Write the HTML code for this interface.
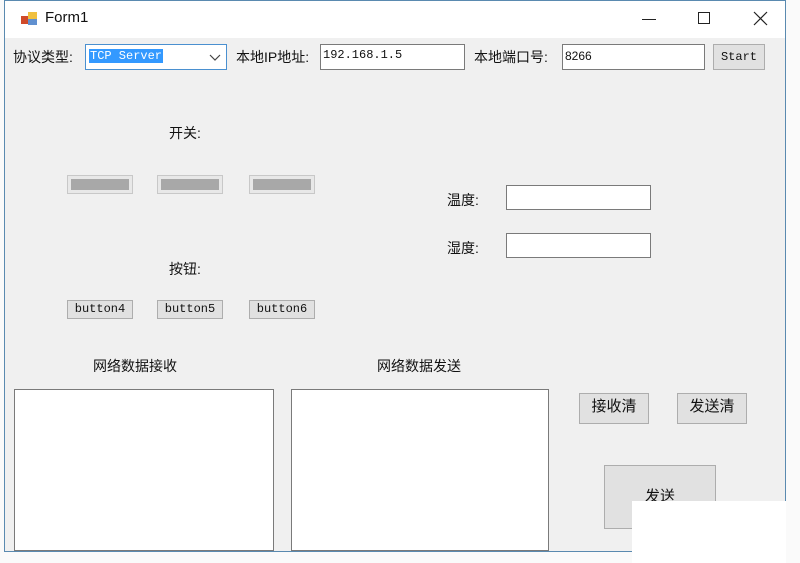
<!DOCTYPE html>
<html><head><meta charset="utf-8"><style>
*{margin:0;padding:0;box-sizing:border-box}
body{width:800px;height:563px;background:#fafafa;position:relative;overflow:hidden;font-family:"Liberation Sans","Noto Sans CJK SC",sans-serif;font-size:14px;color:#111}
.a{position:absolute}
.win{left:4px;top:0;width:782px;height:552px;border:1px solid #5a8ab0;background:#f0f0f0}
.title{left:5px;top:1px;width:780px;height:37px;background:#fff}
.tb{background:#fff;border:1px solid #7a7a7a}
.btn{background:#e1e1e1;border:1px solid #adadad;text-align:center}
.mono{font-family:"Liberation Mono","Noto Serif CJK SC",monospace;font-size:12px}
.g{border:1px solid #c8c8c8;background:#e8e8e8;padding:3px}
.g div{background:#a8a8a8;width:100%;height:100%}
</style></head><body>
<div class="a win"></div>
<div class="a title"></div>
<div class="a" style="left:21px;top:12px;width:16px;height:14px">
<div class="a" style="left:0;top:4px;width:8px;height:8px;background:#d04a2a"></div>
<div class="a" style="left:7px;top:0;width:9px;height:8px;background:#f0c040"></div>
<div class="a" style="left:7px;top:7px;width:9px;height:6px;background:#6090d0"></div>
</div>
<div class="a" style="left:45px;top:9px;font-size:15px">Form1</div>
<div class="a" style="left:642px;top:19px;width:14px;height:1px;background:#222"></div>
<div class="a" style="left:698px;top:12px;width:12px;height:12px;border:1px solid #222"></div>
<svg class="a" style="left:753px;top:11px" width="15" height="15"><path d="M1 1L14 14M14 1L1 14" stroke="#222" stroke-width="1.2"/></svg>

<div class="a" style="left:13px;top:47px">协议类型:</div>
<div class="a" style="left:85px;top:44px;width:142px;height:26px;border:1px solid #4a90d0;background:#fff"></div>
<div class="a mono" style="left:89px;top:49px;background:#3399ff;color:#fff;padding:0 1px">TCP Server</div>
<svg class="a" style="left:209px;top:54px" width="12" height="8"><path d="M1 1L6 6L11 1" stroke="#444" fill="none" stroke-width="1.2"/></svg>
<div class="a" style="left:236px;top:47px">本地IP地址:</div>
<div class="a tb mono" style="left:320px;top:44px;width:145px;height:26px;padding:3px 2px">192.168.1.5</div>
<div class="a" style="left:474px;top:47px">本地端口号:</div>
<div class="a tb" style="left:562px;top:44px;width:143px;height:26px;padding:4px 2px;font-size:12px">8266</div>
<div class="a btn mono" style="left:713px;top:44px;width:52px;height:26px;line-height:24px">Start</div>

<div class="a" style="left:169px;top:123px">开关:</div>
<div class="a g" style="left:67px;top:175px;width:66px;height:19px"><div></div></div>
<div class="a g" style="left:157px;top:175px;width:66px;height:19px"><div></div></div>
<div class="a g" style="left:249px;top:175px;width:66px;height:19px"><div></div></div>
<div class="a" style="left:169px;top:259px">按钮:</div>
<div class="a btn mono" style="left:67px;top:300px;width:66px;height:19px;line-height:17px">button4</div>
<div class="a btn mono" style="left:157px;top:300px;width:66px;height:19px;line-height:17px">button5</div>
<div class="a btn mono" style="left:249px;top:300px;width:66px;height:19px;line-height:17px">button6</div>

<div class="a" style="left:447px;top:190px">温度:</div>
<div class="a tb" style="left:506px;top:185px;width:145px;height:25px"></div>
<div class="a" style="left:447px;top:238px">湿度:</div>
<div class="a tb" style="left:506px;top:233px;width:145px;height:25px"></div>

<div class="a" style="left:93px;top:356px">网络数据接收</div>
<div class="a" style="left:377px;top:356px">网络数据发送</div>
<div class="a tb" style="left:14px;top:389px;width:260px;height:162px"></div>
<div class="a tb" style="left:291px;top:389px;width:258px;height:162px"></div>
<div class="a btn" style="left:579px;top:393px;width:70px;height:31px;line-height:26px;font-size:15px">接收清</div>
<div class="a btn" style="left:677px;top:393px;width:70px;height:31px;line-height:26px;font-size:15px">发送清</div>
<div class="a btn" style="left:604px;top:465px;width:112px;height:64px;line-height:62px;font-size:15px">发送</div>
<div class="a" style="left:632px;top:501px;width:154px;height:62px;background:#fff"></div>
</body></html>
